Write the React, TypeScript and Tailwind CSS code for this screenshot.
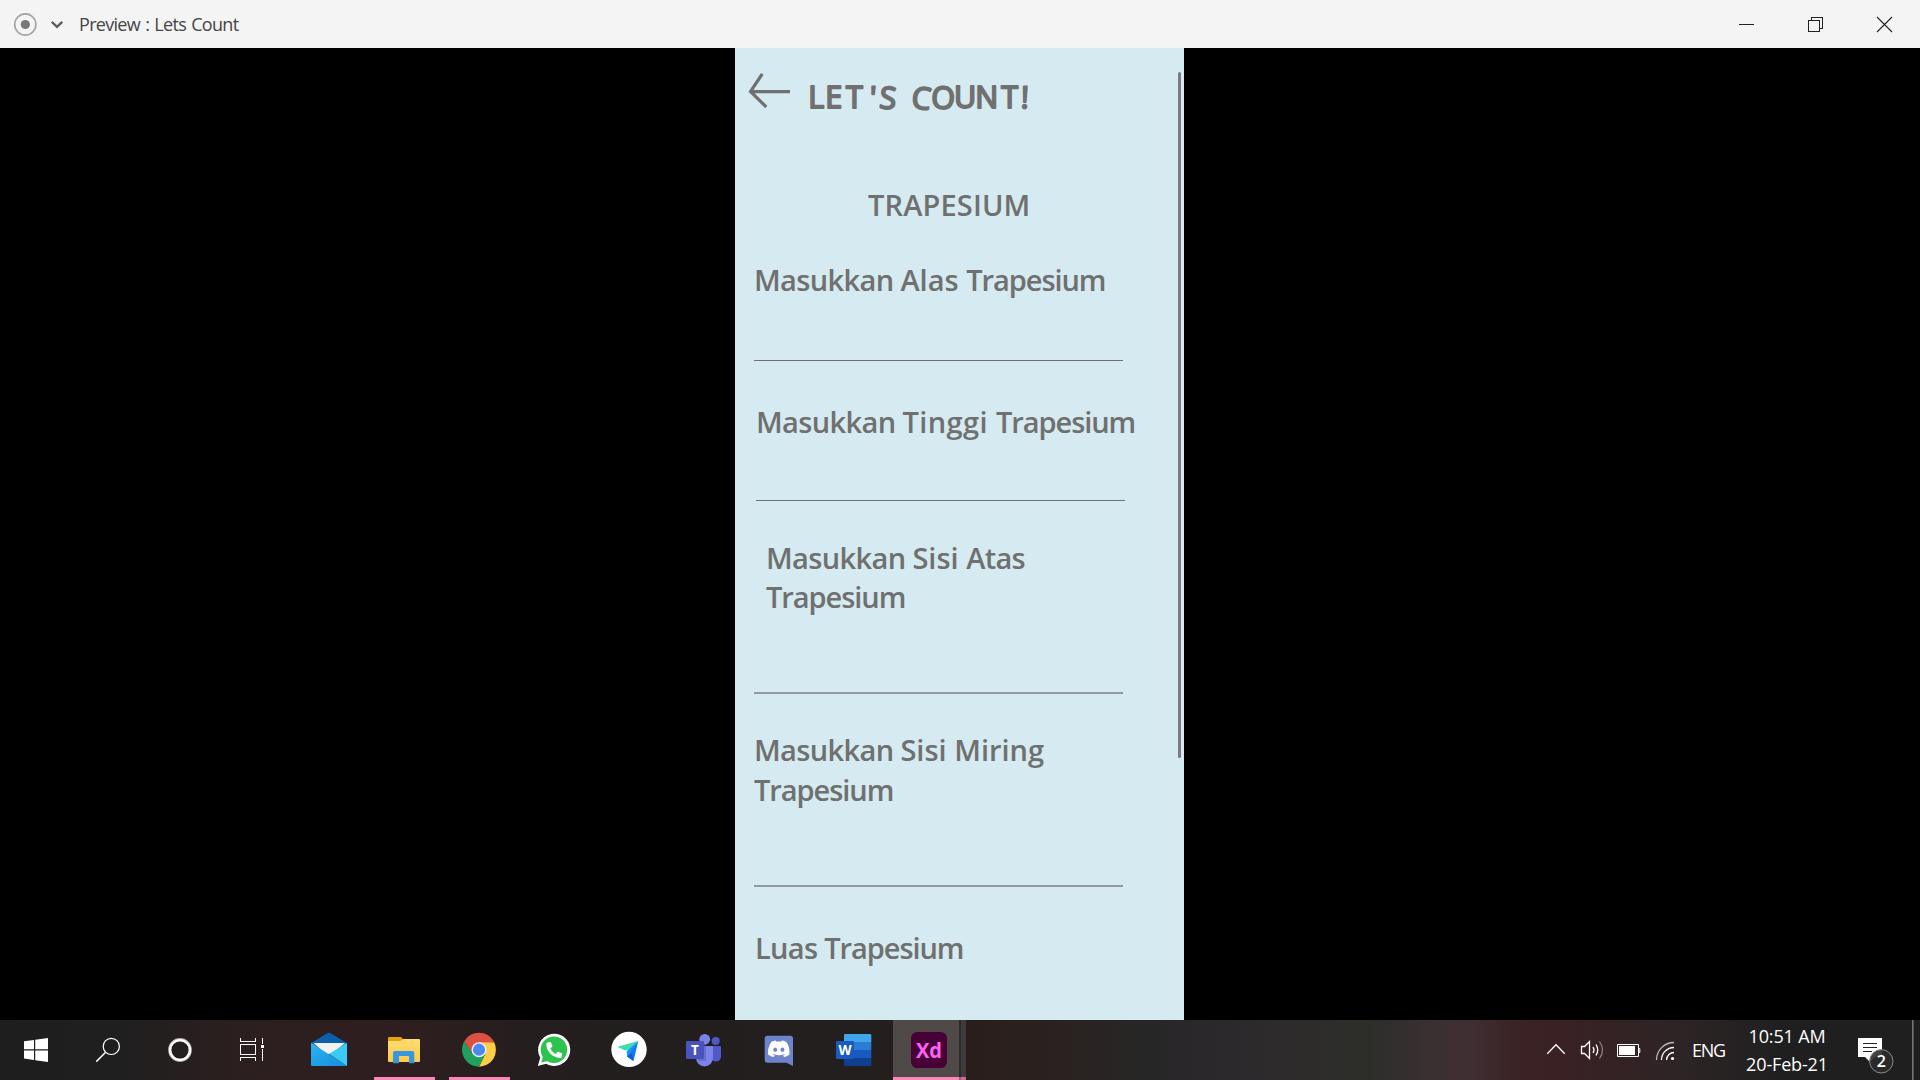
import type { ReactNode } from 'react';
import { SiDiscord } from 'react-icons/si';
import { FaPhoneAlt } from 'react-icons/fa';

function Cell({ children, running }: { children: ReactNode; running?: boolean }) {
  return (
    <div className="flex h-[60px] w-[75px] flex-col">
      <svg className="h-[57px] w-[75px]" viewBox="0 0 75 57">{children}</svg>
      {running && <div className="mx-[7px] h-[3px] bg-[#fc87b6]" />}
    </div>
  );
}

function SystemCell({ children }: { children: ReactNode }) {
  return <svg className="h-[60px] w-[72px]" viewBox="0 0 72 60">{children}</svg>;
}

function TitleBar() {
  return (
    <header className="flex h-12 items-center justify-between bg-[#f4f4f4]">
      <div className="flex h-12 items-center">
        <svg className="h-12 w-[79px]" viewBox="0 0 79 48" fill="none">
          <circle cx="25.3" cy="24.5" r="10.6" stroke="#a3a3a3" strokeWidth="1.6" />
          <circle cx="25.3" cy="24.5" r="4.6" fill="#777" />
          <path d="M51.8 21.8L57 26.8L62.2 21.8" stroke="#5c5c5c" strokeWidth="2.3" />
        </svg>
        <span className="whitespace-nowrap text-[18px] leading-[48px] tracking-[-0.7px] text-[#444] [word-spacing:1.2px]">Preview : Lets Count</span>
      </div>
      <svg className="h-12 w-[220px]" viewBox="0 0 220 48" fill="none" stroke="#222" shapeRendering="crispEdges">
        <path d="M39 24.5H54" />
        <path d="M108.500 20.500H119.500V31.500H108.500Z M111.500 20V17.500H122.500V28.500H120" />
        <path d="M177 17L192 32M192 17L177 32" shapeRendering="auto" strokeWidth="1.1" />
      </svg>
    </header>
  );
}

const Masukkan = () => <span className="tracking-[-0.63px]">Masukkan </span>;
const Trapesium = () => <span className="tracking-[-1.05px]">Trapesium</span>;

function Phone() {
  return (
    <main className="flex h-[972px] w-[449px] justify-between overflow-hidden bg-[#d5ebf1] text-[29px] font-semibold leading-[40px] text-[#707070]">
      <div className="flex w-[430px] shrink-0 flex-col whitespace-nowrap">
        <div className="flex h-[137px]">
          <svg className="h-[70px] w-[70px] shrink-0" viewBox="0 0 70 70" fill="none" stroke="#707070" strokeWidth="3.2">
            <path d="M55 43.7H16M27.300 25.800L15.500 43.500L31.300 59" />
          </svg>
          <h1>
            <svg className="h-[75px] w-[240px]" viewBox="70 0 240 75">
              <text
                x="73.2 90.200 111 133.9 143.800 165 175.800 195.700 219 240.200 266.300 285.600"
                y="60"
                rotate="0 0 0 3 5 0 6 3 0 0 0 2"
                fontSize="30.5"
                fontWeight="400"
                fill="#707070"
                stroke="#707070"
                strokeWidth="1.9"
                strokeLinejoin="round"
              >
                LET'S COUNT!
              </text>
            </svg>
          </h1>
        </div>
        <h2 className="ml-[133px] h-[75px] tracking-[0.15px]">TRAPESIUM</h2>
        <p className="ml-[19px] h-[100px]"><Masukkan />Alas <Trapesium /></p>
        <div className="ml-[19px] h-px w-[369px] bg-[#707070]" />
        <p className="ml-[21px] mt-[41px] h-[98px]"><Masukkan /><span className="tracking-[0.4px]">Tinggi </span><Trapesium /></p>
        <div className="ml-[21px] h-px w-[369px] bg-[#707070]" />
        <p className="ml-[31px] mt-[37px] h-[154px] leading-[39px]"><Masukkan />Sisi <span className="tracking-[-0.7px]">Atas</span><br /><Trapesium /></p>
        <div className="ml-[19px] h-[2px] w-[369px] bg-[#929a9c]" />
        <p className="ml-[19px] mt-[36px] h-[155px]"><Masukkan />Sisi Miring<br /><Trapesium /></p>
        <div className="ml-[19px] h-[2px] w-[369px] bg-[#929a9c]" />
        <p className="ml-[20px] mt-[41px] h-10"><span className="tracking-[-0.7px]">Luas </span><Trapesium /></p>
      </div>
      <div className="mr-[3px] mt-6 h-[686px] w-[3px] shrink-0 rounded-full bg-[#7b7b80]" />
    </main>
  );
}

function Taskbar() {
  return (
    <footer className="flex h-[60px] justify-between bg-[linear-gradient(90deg,#1f1e1e_0px,#201f1f_120px,#2c1f1f_250px,#2f1e1f_400px,#261e1e_510px,#211e1d_620px,#221f1e_860px,#2a1e1c_970px,#2a2321_1080px,#272627_1150px,#2c292d_1230px,#2e2c2b_1300px,#2d2e2a_1370px,#393032_1430px,#402e33_1470px,#3b2426_1510px,#3a2124_1560px,#2d2425_1680px,#1f1f1f_1790px,#1f1f1f_1920px)]">
      <nav className="flex">
        <SystemCell>
          <path fill="#fff" d="M24 21.300L34 19.900V29.200H24ZM35.200 19.700L48 18V29.200H35.200ZM24 30.400H34V39.900L24 38.600ZM35.200 30.400H48V42L35.200 40.200Z" />
        </SystemCell>
        <SystemCell>
          <g fill="none" stroke="#fff" strokeWidth="1.2"><circle cx="39.300" cy="26.400" r="8.100" /><path d="M33.600 32.200L24.300 41.600" strokeWidth="1.500" /></g>
        </SystemCell>
        <SystemCell>
          <circle cx="36" cy="30" r="10.300" fill="none" stroke="#aaa" strokeWidth="3.200" />
          <circle cx="36" cy="30" r="9.900" fill="none" stroke="#fff" strokeWidth="2.300" />
        </SystemCell>
        <SystemCell>
          <g fill="none" stroke="#fff" shapeRendering="crispEdges">
            <path d="M24.500 18V21.500H39.500V18M24.500 24.500H39.500V34.500H24.500ZM24.500 41V37.500H39.500V41M46.500 18V24M46.500 29V41" />
            <path fill="#fff" stroke="none" d="M45 25h3v3h-3z" />
          </g>
        </SystemCell>
        <div className="w-1" />
        <Cell>
          <defs>
            <linearGradient id="mail" x2="1" y2="1"><stop stopColor="#2eb4ee" /><stop offset="1" stopColor="#158de0" /></linearGradient>
          </defs>
          <path d="M19 23L35.500 13.200Q37 12.300 38.500 13.200L55 23V30H19Z" fill="#0b5fae" />
          <path d="M21.500 23H53L40 34H34Z" fill="#f2f2f2" />
          <path d="M19 22.700L55 46H20Q19 46 19 45Z" fill="url(#mail)" />
          <path d="M55 22.700V46L37 34Z" fill="#3ccbf4" />
        </Cell>
        <Cell running>
          <defs>
            <linearGradient id="folder" x2="0" y2="1"><stop stopColor="#ffdc72" /><stop offset="1" stopColor="#fbcb49" /></linearGradient>
          </defs>
          <path d="M21 18Q21 17 22 17H34L36 19V22H21Z" fill="#e5a30d" />
          <path d="M21 21H33.500L36.500 19H52Q53 19 53 20V41Q53 42 52 42H22Q21 42 21 41Z" fill="url(#folder)" />
          <path d="M26 43.300V33Q26 31 28 31H45.300Q47.300 31 47.300 33V43.300H42V36H32V43.300Z" fill="#3797de" />
        </Cell>
        <Cell running>
          <path d="M37 29.700L22.300 21.200A17 17 0 0 1 51.700 21.200Z" fill="#dd5144" />
          <path d="M37 22.200H52.200A17 17 0 0 1 37 46.700L43.500 33.500Z" fill="#ffcd46" />
          <path d="M22.300 21.200A17 17 0 0 0 37 46.700L43.500 33.500L30.500 33.500Z" fill="#1fa05f" />
          <path d="M22.300 21.200L30.500 33.500L37 22.200H52.200L51.500 21Z" fill="#dd5144" />
          <circle cx="37" cy="29.700" r="7.500" fill="#f1f1f1" />
          <circle cx="37" cy="29.700" r="6.100" fill="#4a8af4" />
        </Cell>
        <Cell>
          <path d="M20.800 46L23.200 37.800A16.100 16.100 0 1 1 29 43.700Z" fill="#fff" />
          <path d="M24.200 42.600L25.800 37A13.300 13.300 0 1 1 30.200 41.200Z" fill="#2dc34f" />
          <FaPhoneAlt x="29.200" y="22" size={16} color="#fff" />
        </Cell>
        <Cell>
          <circle cx="37" cy="29.400" r="17.700" fill="#fff" />
          <path d="M25.300 26.800L46.300 21L38 29.500L33 30.500Z" fill="#3fdcb4" />
          <path d="M46.300 21L41.500 41L35 36.500L38 29.500Z" fill="#1677ff" />
          <path d="M46.300 21L34.500 31.500L35.500 36.500Z" fill="#0d9be8" />
          <path d="M41.500 41L35 36.500L40 33Z" fill="#0b5de0" />
        </Cell>
        <Cell>
          <circle cx="48.700" cy="21" r="4" fill="#5059c9" />
          <circle cx="37.700" cy="19.300" r="5.400" fill="#7b83eb" />
          <path d="M44 26H53Q54 26 54 27V36A5 5 0 0 1 44 37Z" fill="#5059c9" />
          <path d="M29 26H45Q46 26 46 27V38A8.500 8.500 0 0 1 29 38Z" fill="#7b83eb" />
          <rect x="31" y="24" width="8" height="17" fill="#4d55b0" opacity=".45" />
          <rect x="19" y="21" width="18" height="18" rx="1.300" fill="#4b53bc" />
          <text x="28" y="34.800" textAnchor="middle" fontSize="13.500" fontWeight="700" fill="#fff">T</text>
        </Cell>
        <Cell>
          <path d="M25.500 15.700H48.200Q51 15.700 51 18.500V46L44.500 42.700H25.500Q22.700 42.700 22.700 40V18.500Q22.700 15.700 25.500 15.700Z" fill="#6d83cb" />
          <SiDiscord x="26" y="18" size={21.7} color="#fff" />
        </Cell>
        <Cell>
          <path d="M27 22V15.300Q27 14 28.300 14H53Q54.300 14 54.300 15.300V22Z" fill="#41a5ee" />
          <path d="M27 22H54.300V30H27Z" fill="#2b7cd3" />
          <path d="M27 30H54.300V38H27Z" fill="#185abd" />
          <path d="M27 38H54.300V44.700Q54.300 46 53 46H28.300Q27 46 27 44.700Z" fill="#103f91" />
          <rect x="19" y="21" width="18" height="18" rx="1.300" fill="#185abd" />
          <text x="28" y="34.800" textAnchor="middle" fontSize="13.500" fontWeight="700" fill="#fff">W</text>
        </Cell>
        <div className="ml-px flex h-[60px] w-[73px]">
          <div className="h-[60px] w-[66px] border-b-[3px] border-[#fc87b6] bg-[#4f4a48]">
            <svg className="h-[57px] w-[66px]" viewBox="1 0 66 57">
              <rect x="19" y="12" width="36" height="36" rx="6.300" fill="#470137" />
              <text x="37" y="37.800" textAnchor="middle" fontSize="22" fontWeight="700" fill="#ff61f6" textLength="26" lengthAdjust="spacingAndGlyphs">Xd</text>
            </svg>
          </div>
          <div className="h-[60px] w-[2px] border-b-[3px] border-[#a3587a] bg-[#2d2b2a]" />
          <div className="h-[60px] w-[5px] border-b-[3px] border-[#cc6c93] bg-[#3f3b3a]" />
        </div>
      </nav>
      <div className="flex text-[18px] text-white">
        <svg className="h-[60px] w-[152px]" viewBox="1540 0 152 60" fill="none" stroke="#fff" strokeWidth="1.300">
          <path d="M1547.300 33.700L1556 24.800L1564.700 33.700" />
          <path d="M1581.500 26.500H1584.500L1589.500 21.500V38.500L1584.500 33.500H1581.500Z" />
          <path d="M1593 27Q1595 30 1593 33M1596 24.500Q1599.500 30 1596 35.500" />
          <path d="M1599.500 21.500Q1605.500 30 1599.500 38.500" stroke="#887f80" />
          <path d="M1617.500 24.500H1638.500V36.500H1617.500ZM1639 28.500H1639.800V32.500H1639" strokeWidth="1" />
          <path d="M1619 26H1635V35H1619Z" fill="#fff" stroke="none" />
          <path d="M1656.500 40A17.500 17.500 0 0 1 1674 22.500" stroke="#bbb" />
          <path d="M1661.500 40A12.500 12.500 0 0 1 1674 27.500M1666.500 40A7.500 7.500 0 0 1 1674 32.500" />
          <circle cx="1672.500" cy="38.500" r="1.600" fill="#fff" stroke="none" />
        </svg>
        <span className="w-[45px] whitespace-nowrap leading-[61px] tracking-[-1.3px]">ENG</span>
        <div className="flex w-[100px] flex-col items-center whitespace-nowrap pt-[2px] leading-[28px] tracking-[-0.15px]">
          <span>10:51 AM</span>
          <span>20-Feb-21</span>
        </div>
        <svg className="h-[60px] w-[83px]" viewBox="1837 0 83 60">
          <path d="M1858 18H1882V37H1875L1870 42L1865 37H1858Z" fill="#fff" />
          <path d="M1863 23.500H1877M1863 27.500H1877M1863 31.500H1872" stroke="#222" strokeWidth="1" />
          <circle cx="1881.300" cy="41.300" r="11.700" fill="#2b2b2b" fillOpacity=".9" stroke="#8a8a8a" strokeWidth="1" />
          <text x="1881.300" y="47" textAnchor="middle" fontSize="16" fontWeight="600" fill="#fff">2</text>
          <path d="M1912.800 0V60" stroke="#757575" strokeWidth="1.600" />
        </svg>
      </div>
    </footer>
  );
}

export default function App() {
  return (
    <div className="flex h-[1080px] w-[1920px] flex-col overflow-hidden bg-black font-['Open_Sans',sans-serif]">
      <TitleBar />
      <div className="flex h-[972px] pl-[735px]">
        <Phone />
      </div>
      <Taskbar />
    </div>
  );
}
